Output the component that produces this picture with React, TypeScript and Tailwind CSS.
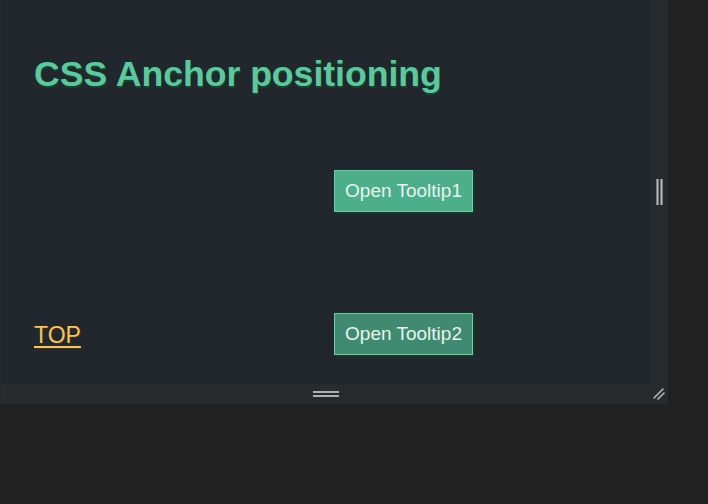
import React from "react";

export default function App() {
  const btn =
    "w-[139px] h-[42px] flex items-center justify-center text-[19px] text-[#e8f4ee] border border-[#78c9a8] shadow-[2px_2px_0_#0b3d26]";
  return (
    <div className="w-[708px] h-[504px] bg-[#212121] overflow-hidden" style={{ fontFamily: '"Liberation Sans", Arial, sans-serif' }}>
      <div className="w-[668px] h-[404px] flex flex-col">
        <div className="flex h-[384px]">
          <div className="w-[650px] h-[384px] bg-[#22262d] border-l-2 border-[#26292c] flex flex-col">
            <h1 className="mt-[57px] ml-[32px] text-[35.6px] leading-[35px] font-bold text-[#5ec79e] [text-shadow:1px_2px_0_#0a4a2c]">
              CSS Anchor positioning
            </h1>
            <div className="mt-[78px] ml-[332px]">
              <button className={btn + " bg-[#4cae8a]"}>Open Tooltip1</button>
            </div>
            <div className="mt-[101px] ml-[32px] flex items-center">
              <div className="w-[300px] pt-[4px]">
                <a href="#" className="text-[23px] leading-[24px] text-[#f3c468] underline underline-offset-[3px] [text-shadow:1px_1px_0_#4a3000]">
                  TOP
                </a>
              </div>
              <button className={btn + " bg-[#3f8a70]"}>Open Tooltip2</button>
            </div>
          </div>
          <div className="w-[18px] h-[384px] bg-[#272b2e] flex items-center justify-center">
            <div className="flex gap-[1px] h-[26px]">
              <div className="w-[3px] h-full bg-[#b8b8b8] border-x border-[#7a7a7a]"></div>
              <div className="w-[3px] h-full bg-[#b8b8b8] border-x border-[#7a7a7a]"></div>
            </div>
          </div>
        </div>
        <div className="flex h-[20px]">
          <div className="w-[650px] h-[20px] bg-[#272b2e] border-l-2 border-[#26292c] flex items-center justify-center">
            <div className="flex flex-col gap-[2px] w-[26px]">
              <div className="h-[2px] w-full bg-[#b0b0b0]"></div>
              <div className="h-[2px] w-full bg-[#b0b0b0]"></div>
            </div>
          </div>
          <div className="w-[18px] h-[20px] bg-[#272b2e] relative">
            <svg className="absolute left-[2px] top-[3px]" width="14" height="14" viewBox="0 0 14 14">
              <line x1="2" y1="11" x2="11" y2="2" stroke="#b5b5b5" strokeWidth="1.6" strokeLinecap="round" />
              <line x1="6" y1="12" x2="12" y2="6" stroke="#b5b5b5" strokeWidth="1.6" strokeLinecap="round" />
            </svg>
          </div>
        </div>
      </div>
    </div>
  );
}
